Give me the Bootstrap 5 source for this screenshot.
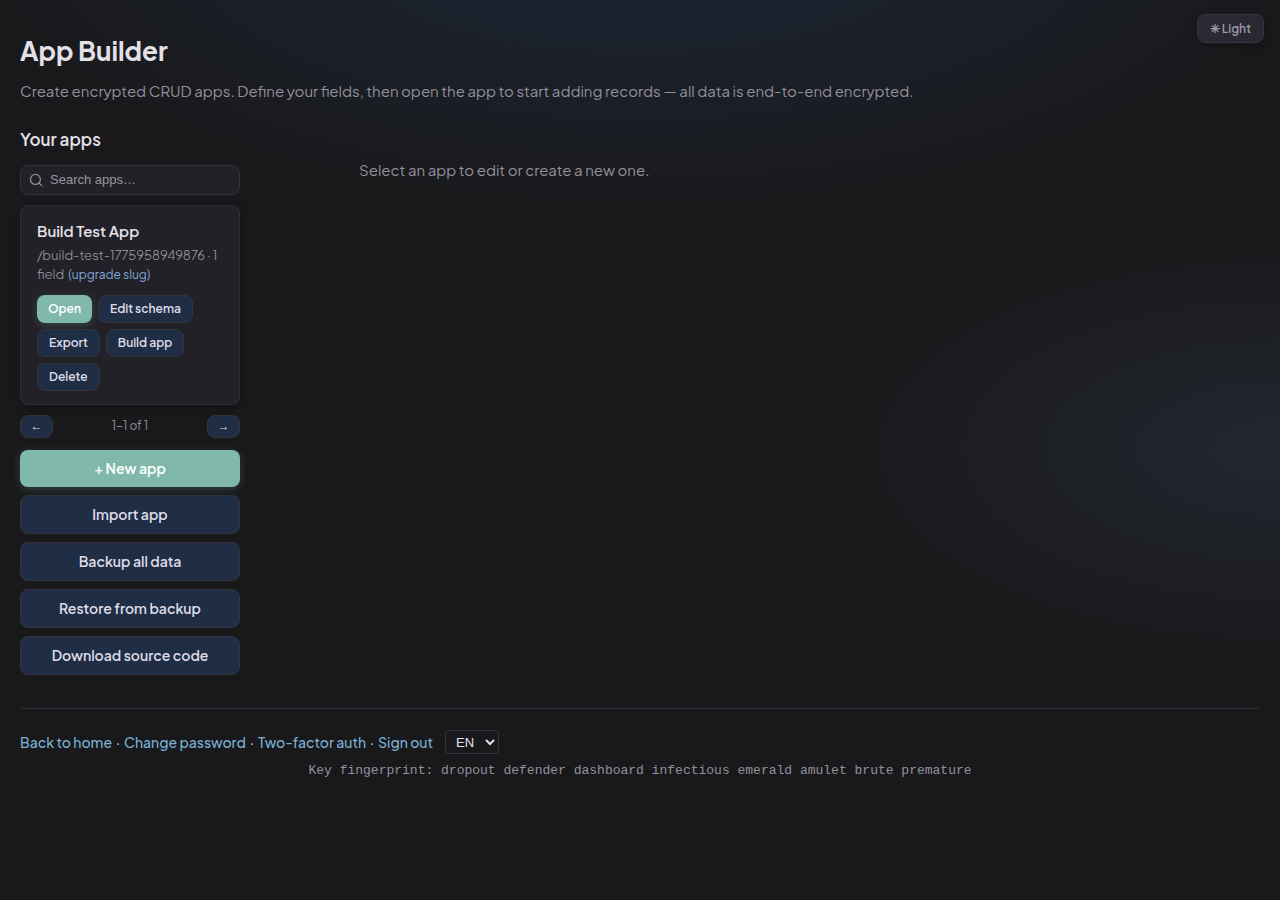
<!DOCTYPE html>
<html lang="en" data-bs-theme="dark">
<head>
<meta charset="utf-8">
<meta name="viewport" content="width=device-width, initial-scale=1">
<title>App Builder</title>
<link href="https://cdn.jsdelivr.net/npm/bootstrap@5.3.0/dist/css/bootstrap.min.css" rel="stylesheet">
<style>
  :root { --ink: #e4e0ea; --muted-ink: #93909c; --line: #35323c; --panel: #222127; --navy: #1f2e45; --mint: #80b9aa; --sky: #7ab0d4; }
  body {
    font-family: "Plus Jakarta Sans", Inter, sans-serif; font-size: 15px; line-height: 24px; color: var(--ink);
    min-height: 100vh; background-color: #19191b;
    background-image:
      radial-gradient(ellipse 80% 50% at 50% -10%, rgba(32, 54, 86, .5), transparent 68%),
      radial-gradient(ellipse 60% 40% at 100% 50%, rgba(52, 66, 86, .34), transparent 60%);
    background-repeat: no-repeat;
  }
  .page { padding: 31px 20px; }
  h1 { font-size: 26px; line-height: 40px; font-weight: 700; margin-bottom: 8px; color: var(--ink); }
  .intro { color: var(--muted-ink); margin-bottom: 24px; }
  h2 { font-size: 17px; line-height: 24px; font-weight: 600; margin-bottom: 14px; color: var(--ink); }
  .sidebar { width: 220px; }
  .btn { --bs-btn-font-size: 14px; --bs-btn-font-weight: 600; --bs-btn-line-height: 21px; --bs-btn-padding-y: 8px; --bs-btn-padding-x: 16px; --bs-btn-border-radius: 8px; }
  .btn-navy { --bs-btn-bg: var(--navy); --bs-btn-border-color: var(--line); --bs-btn-color: #dedbe6; --bs-btn-hover-bg: #273a57; --bs-btn-hover-color: #fff; --bs-btn-hover-border-color: var(--line); }
  .btn-mint { --bs-btn-bg: var(--mint); --bs-btn-color: #fff; --bs-btn-border-width: 0px; --bs-btn-hover-bg: #90c6b8; --bs-btn-hover-color: #fff; box-shadow: 0 2px 8px rgba(128, 185, 170, .25); }
  .btn-mini { --bs-btn-font-size: 12px; --bs-btn-line-height: 20px; --bs-btn-padding-y: 4px; --bs-btn-padding-x: 11px; height: 28px; }
  .btn-navy.btn-mini { --bs-btn-padding-y: 3px; }
  .btn-step { font-family: "Liberation Sans", sans-serif; --bs-btn-font-size: 12px; --bs-btn-line-height: 21px; --bs-btn-padding-y: 0px; --bs-btn-padding-x: 9px; width: 33px; }
  .btn-theme { --bs-btn-font-size: 12px; --bs-btn-line-height: 17px; --bs-btn-padding-y: 5px; --bs-btn-padding-x: 12px; --bs-btn-bg: #2a2832; --bs-btn-border-color: #38343f; --bs-btn-color: #9b97a5; top: 14px; right: 16px; box-shadow: 0 2px 8px rgba(0, 0, 0, .3); }
  .search-icon { left: 9px; top: 8px; color: #8f8c96; }
  .search-box { font-family: "Liberation Sans", sans-serif; font-size: 13px; line-height: 18px; padding: 5px 10px 5px 29px; background: var(--panel); border-color: var(--line); border-radius: 8px; color: var(--ink); }
  .search-box::placeholder { color: #98959f; }
  .app-card { background: var(--panel); border-color: #302e37; border-radius: 8px; padding: 13px 16px; margin-top: 10px; box-shadow: 0 2px 10px rgba(0, 0, 0, .3); }
  .app-title { font-size: 15px; line-height: 24px; font-weight: 600; }
  .app-meta { font-size: 13px; line-height: 19px; font-weight: 300; color: #a09ca8; margin: 3px 0 11px; }
  .app-meta a { font-size: 12px; font-weight: 400; color: #7fa6d8; margin-left: 2px; }
  .pager-row { margin: 10px 0 12px; }
  .pages { font-size: 12px; line-height: 21px; color: #93909c; }
  .detail { color: #93909c; padding: 31px 0 0 119px; }
  .page-foot { border-top: 1px solid #2f2d36; padding-top: 21px; margin-top: 33px; }
  .page-foot nav { font-size: 14px; margin-bottom: 8px; }
  .foot-links { gap: 4px; }
  .page-foot a { color: var(--sky); font-weight: 500; }
  .lang { font-family: "Liberation Sans", sans-serif; font-size: 13px; height: 24px; width: 54px; padding: 0 2px 0 6px; margin-left: 12px; background: #19191b; color: var(--ink); border: 1px solid var(--line); border-radius: 4px; }
  .fingerprint { font: 13px/18px "Liberation Mono", monospace; color: #93909c; }
  .gap-6px { gap: 6px; }
</style>
</head>
<body>
<button type="button" class="btn btn-theme position-absolute">✳ Light</button>
<div class="page container-fluid">
  <header>
    <h1>App Builder</h1>
    <p class="intro">Create encrypted CRUD apps. Define your fields, then open the app to start adding records — all data is end-to-end encrypted.</p>
  </header>
  <main class="d-flex">
    <aside class="sidebar flex-shrink-0">
      <h2>Your apps</h2>
      <div class="position-relative">
        <svg class="search-icon position-absolute" width="14" height="14" viewBox="0 0 24 24" fill="none" stroke="currentColor" stroke-width="2.2" stroke-linecap="round" aria-hidden="true"><circle cx="11" cy="11" r="8.500"/><path d="M22 22 17 17"/></svg>
        <input type="search" class="form-control search-box" placeholder="Search apps…" aria-label="Search apps">
      </div>
      <article class="card app-card">
        <div class="app-title">Build Test App</div>
        <div class="app-meta">/build-test-1775958949876 · 1 field <a href="#" class="text-decoration-none">(upgrade slug)</a></div>
        <div class="d-flex flex-wrap gap-6px">
          <button type="button" class="btn btn-mint btn-mini">Open</button>
          <button type="button" class="btn btn-navy btn-mini">Edit schema</button>
          <button type="button" class="btn btn-navy btn-mini">Export</button>
          <button type="button" class="btn btn-navy btn-mini">Build app</button>
          <button type="button" class="btn btn-navy btn-mini">Delete</button>
        </div>
      </article>
      <div class="pager-row d-flex justify-content-between">
        <button type="button" class="btn btn-navy btn-step" aria-label="Previous page">←</button>
        <span class="pages">1–1 of 1</span>
        <button type="button" class="btn btn-navy btn-step" aria-label="Next page">→</button>
      </div>
      <div class="d-grid gap-2">
        <button type="button" class="btn btn-mint">+ New app</button>
        <button type="button" class="btn btn-navy">Import app</button>
        <button type="button" class="btn btn-navy">Backup all data</button>
        <button type="button" class="btn btn-navy">Restore from backup</button>
        <button type="button" class="btn btn-navy">Download source code</button>
      </div>
    </aside>
    <section class="detail flex-grow-1">Select an app to edit or create a new one.</section>
  </main>
  <footer class="page-foot">
    <nav class="d-flex align-items-center" aria-label="Account">
      <div class="foot-links d-flex flex-wrap">
        <a href="#" class="text-decoration-none">Back to home</a><span>·</span>
        <a href="#" class="text-decoration-none">Change password</a><span>·</span>
        <a href="#" class="text-decoration-none">Two-factor auth</a><span>·</span>
        <a href="#" class="text-decoration-none">Sign out</a>
      </div>
      <select class="lang" aria-label="Language"><option>EN</option></select>
    </nav>
    <div class="fingerprint text-center">Key fingerprint: dropout defender dashboard infectious emerald amulet brute premature</div>
  </footer>
</div>
<script src="https://cdn.jsdelivr.net/npm/bootstrap@5.3.0/dist/js/bootstrap.bundle.min.js"></script>
</body>
</html>
